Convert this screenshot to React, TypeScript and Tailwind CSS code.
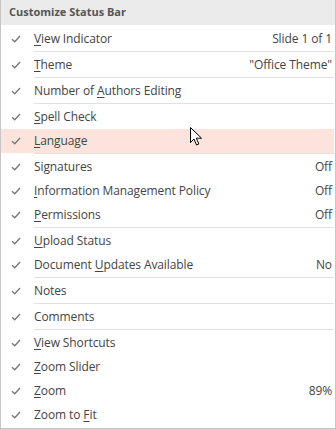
import React from "react";

type Item = { pre: string; key?: string; post?: string; value?: string; sep?: boolean; hl?: boolean };

const items: Item[] = [
  { pre: "", key: "V", post: "iew Indicator", value: "Slide 1 of 1", sep: true },
  { pre: "", key: "T", post: "heme", value: '"Office Theme"', sep: true },
  { pre: "Number of ", key: "A", post: "uthors Editing", sep: true },
  { pre: "", key: "S", post: "pell Check" },
  { pre: "", key: "L", post: "anguage", hl: true, sep: true },
  { pre: "Signatures", value: "Off" },
  { pre: "", key: "I", post: "nformation Management Policy", value: "Off" },
  { pre: "", key: "P", post: "ermissions", value: "Off", sep: true },
  { pre: "", key: "U", post: "pload Status" },
  { pre: "Document ", key: "U", post: "pdates Available", value: "No", sep: true },
  { pre: "Notes", sep: true },
  { pre: "Comments", sep: true },
  { pre: "", key: "V", post: "iew Shortcuts" },
  { pre: "", key: "Z", post: "oom Slider" },
  { pre: "", key: "Z", post: "oom", value: "89%" },
  { pre: "Zoom to ", key: "F", post: "it" },
];

function Check() {
  return (
    <svg width="10" height="8" viewBox="0 0 10 8" className="shrink-0">
      <path d="M1 4.2 L3.8 6.8 L9 1" fill="none" stroke="#777" strokeWidth="1.3" />
    </svg>
  );
}

export default function App() {
  return (
    <div
      className="relative w-[336px] h-[429px] bg-white border border-[#c6c6c6] border-t-0 flex flex-col text-[#444] text-[12px]"
      style={{ fontFamily: '"Segoe UI", "Open Sans", "Noto Sans", sans-serif' }}
    >
      <div className="h-[25px] bg-[#ebebeb] flex items-center pl-[8px] font-bold text-[#555] text-[11px] shrink-0">
        Customize Status Bar
      </div>
      <div className="h-[2px] shrink-0" />
      {items.map((it, i) => (
        <React.Fragment key={i}>
          <div className={`h-[24px] flex items-center shrink-0 ${it.hl ? "bg-[#fce4dc] mr-[1px]" : ""}`}>
            <div className="w-[33px] flex justify-center pl-[1px] pr-[4px]">
              <Check />
            </div>
            <div className="flex-1 whitespace-nowrap tracking-[-0.1px]">
              {it.pre}
              {it.key && <span className="underline underline-offset-2">{it.key}</span>}
              {it.post}
            </div>
            {it.value && <div className="pr-[3px] whitespace-nowrap tracking-[-0.1px]">{it.value}</div>}
          </div>
          {it.sep && (
            <div className="h-[2px] shrink-0 pl-[33px] pr-[1px]">
              <div className="h-[1px] bg-[#e1e1e1]" />
            </div>
          )}
        </React.Fragment>
      ))}
      <svg
        className="absolute left-[189px] top-[127px]"
        width="13"
        height="20"
        viewBox="0 0 13 20"
      >
        <path
          d="M0.5 0.5 L0.5 15.5 L4 12 L6.5 18 L8.8 17 L6.3 11.2 L11.5 11.2 Z"
          fill="#fff"
          stroke="#000"
          strokeWidth="1"
          strokeLinejoin="miter"
        />
      </svg>
    </div>
  );
}
